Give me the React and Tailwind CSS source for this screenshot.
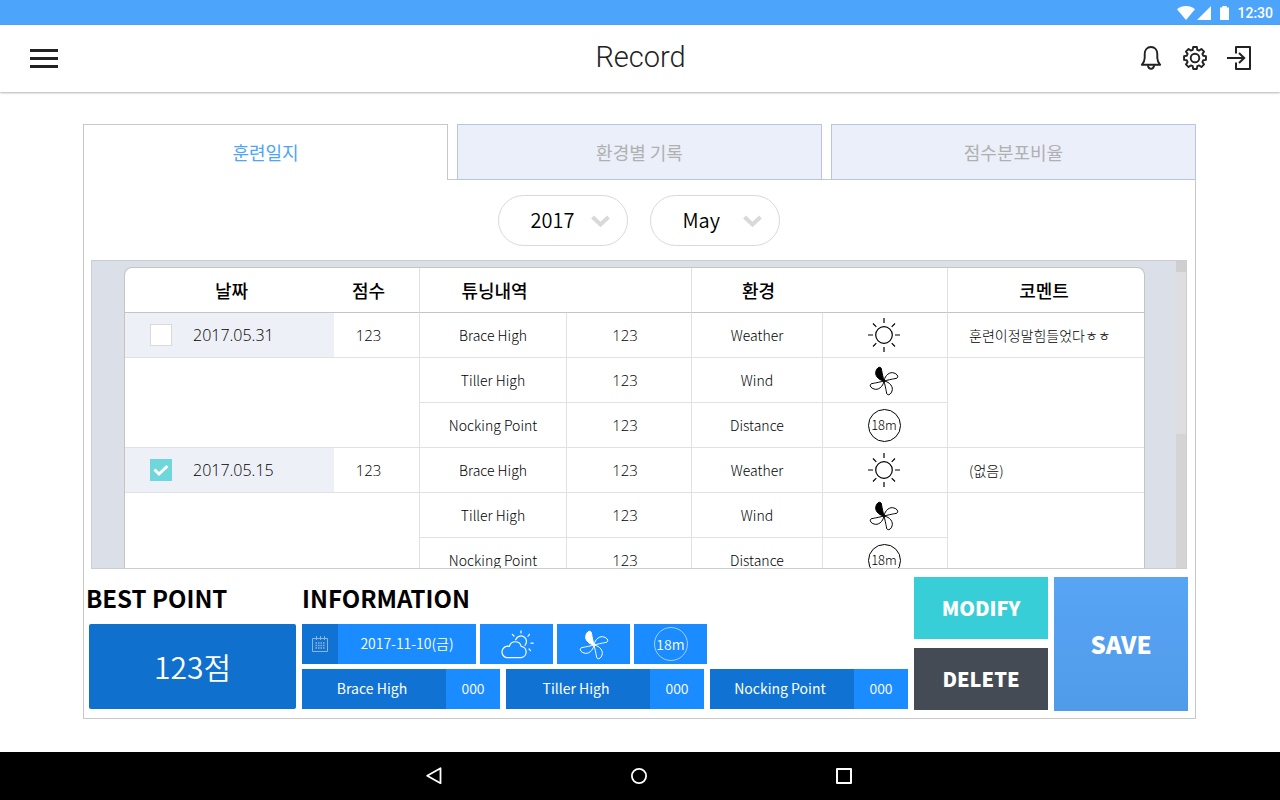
import { useState } from "react";

const KR = "font-['Noto_Sans_CJK_KR',sans-serif]";

function gearPath() {
  const points = [];
  for (let i = 0; i < 8; i++) {
    const base = (i * Math.PI) / 4;
    [[-0.27, 8.5], [-0.17, 11.1], [0.17, 11.1], [0.27, 8.5]].forEach(([a, r]) => {
      points.push(`${(12 + r * Math.sin(base + a)).toFixed(2)} ${(12 - r * Math.cos(base + a)).toFixed(2)}`);
    });
  }
  return `M${points.join("L")}Z`;
}

function BellIcon() {
  return (
    <svg width="24" height="24" viewBox="0 0 24 24" fill="none" stroke="#222" strokeWidth="1.9" strokeLinejoin="round">
      <path d="M12 1C8 1 5.7 4 5.7 8V12C5.7 15 5 16.3 2.8 18.8H21.2C19 16.3 18.3 15 18.3 12V8C18.3 4 16 1 12 1Z" />
      <path d="M8.8 19.2C9.2 21.7 10.4 22.9 12 22.9S14.8 21.7 15.2 19.2" />
    </svg>
  );
}

function GearIcon() {
  return (
    <svg width="24" height="24" viewBox="0 0 24 24" fill="none" stroke="#222" strokeWidth="1.9" strokeLinejoin="round">
      <path d={gearPath()} />
      <circle cx="12" cy="12" r="4.3" />
    </svg>
  );
}

function ExitIcon() {
  return (
    <svg width="24" height="24" viewBox="0 0 24 24" fill="none" stroke="#222" strokeWidth="2" strokeLinejoin="round">
      <path d="M9 7.5V1H23V23H9V16.5" />
      <path d="M0 12H17M12 7L17.2 12L12 17" strokeLinejoin="miter" />
    </svg>
  );
}

function SunIcon() {
  return (
    <svg width="36" height="36" viewBox="0 0 36 36" fill="none" stroke="#000" strokeWidth="1.2" role="img" aria-label="Sunny">
      <circle cx="18" cy="18" r="8.3" />
      <path d="M18 1V6M18 30V35M2 18H7M29 18H34M7 6.5L10.3 9.8M29 6.5L25.7 9.8M7 29.5L10.3 26.2M29 29.5L25.7 26.2" />
    </svg>
  );
}

const BLADE = "M0 0C-6 -1 -9.5 -6 -8 -10C-7 -14 -3 -15 -2.6 -12C-2 -9 -1.5 -6 0 0Z";

function FanIcon() {
  return (
    <svg width="32" height="32" viewBox="-16 -17 32 32" fill="none" stroke="currentColor" strokeWidth="1" role="img" aria-label="Wind">
      <path d={BLADE} fill="currentColor" />
      <path d={BLADE} transform="rotate(90)" />
      <path d={BLADE} transform="rotate(180)" />
      <path d={BLADE} transform="rotate(270)" />
    </svg>
  );
}

function CloudSunIcon() {
  return (
    <svg width="34" height="29" viewBox="0 0 34 29" fill="none" stroke="#fff" strokeWidth="1.2" strokeLinecap="round" role="img" aria-label="Partly cloudy">
      <path d="M6.3 27.6H21.2A5.7 5.7 0 0 0 21.2 16.3A6.1 6.1 0 0 0 9.4 16.3A5.7 5.7 0 0 0 6.3 27.6Z" />
      <path d="M15.6 9.8A5.6 5.6 0 1 1 25 15.4" />
      <path d="M21 .9V3M12.3 4.3L14 6M29.5 4.3L28 6.2M31 13.2H33.2M29 18.9L30.5 20.6" />
    </svg>
  );
}

function CalendarIcon() {
  return (
    <svg width="16" height="16" viewBox="0 0 16 16" fill="none" stroke="#8fb3d9" strokeWidth="1" aria-hidden="true">
      <path d="M.5 2.5H15.5V15.5H.5ZM4.5 0V4M8.5 0V4M12.5 0V4" />
      <path d="M3.5 7H12.5M3.5 9.5H12.5M3.5 12H12.5" strokeWidth="1.4" strokeDasharray="1.5 1" />
    </svg>
  );
}

function PillSelect({ id, label, options }) {
  return (
    <div className="relative">
      <label htmlFor={id} className="sr-only">{label}</label>
      <select
        id={id}
        className="h-[51px] w-[130px] appearance-none rounded-full border border-[#d9d9d9] bg-white pb-[2px] pl-8 text-[20px] font-[350] leading-9 text-black"
      >
        {options.map((o) => <option key={o}>{o}</option>)}
      </select>
      <svg className="pointer-events-none absolute right-[18px] top-5" width="19" height="13" viewBox="0 0 19 13" fill="none" stroke="#d9d9d9" strokeWidth="4">
        <path d="M1.5 2L9.5 9.5L17.5 2" />
      </svg>
    </div>
  );
}

const LINE = "border-[#e1e1e1]";

function Measure({ label, value, conditions, icon }) {
  return (
    <>
      <td className={`border-b border-r ${LINE}`}>{label}</td>
      <td className={`border-b border-r ${LINE} pr-2 font-['Open_Sans',sans-serif] text-[15px]`}>{value}</td>
      <td className={`border-b border-r ${LINE}`}>{conditions}</td>
      <td className={`border-b border-r ${LINE}`}>
        <div className="flex justify-center pr-[2px]">{icon}</div>
      </td>
    </>
  );
}

function DistanceBadge() {
  return (
    <span className="flex size-[33px] items-center justify-center rounded-full border border-black text-[13px]">18m</span>
  );
}

function RecordRows({ date, comment, selected }) {
  const [checked, setChecked] = useState(selected);
  const id = `record-${date}`;
  return (
    <tbody>
      <tr className="h-[45px]">
        <td className={`border-b ${LINE} bg-[#edf0f6] p-0`}>
          <div className="flex items-center gap-[21px] pl-[25px]">
            <span className="relative flex size-[22px]">
              <input
                id={id}
                type="checkbox"
                checked={checked}
                onChange={(e) => setChecked(e.target.checked)}
                className="size-[22px] appearance-none border border-[#d9d9d9] bg-white checked:border-[#6fd6dc] checked:bg-[#6fd6dc]"
              />
              {checked && (
                <svg className="pointer-events-none absolute inset-0" width="22" height="22" viewBox="0 0 22 22" fill="none" stroke="#fff" strokeWidth="3">
                  <path d="M4.5 10.5L9 15L17.5 7" />
                </svg>
              )}
            </span>
            <label htmlFor={id} className="font-['Open_Sans',sans-serif] text-[16px]">{date}</label>
          </div>
        </td>
        <td className={`border-b border-r ${LINE} pr-4 font-['Open_Sans',sans-serif] text-[15px]`}>123</td>
        <Measure label="Brace High" value="123" conditions="Weather" icon={<SunIcon />} />
        <td className={`border-b ${LINE} pl-[21px] text-left`}>{comment}</td>
      </tr>
      <tr className="h-[45px]">
        <td colSpan={2} rowSpan={2} className={`border-b border-r ${LINE}`} />
        <Measure label="Tiller High" value="123" conditions="Wind" icon={<FanIcon />} />
        <td rowSpan={2} className={`border-b ${LINE}`} />
      </tr>
      <tr className="h-[45px]">
        <Measure label="Nocking Point" value="123" conditions="Distance" icon={<DistanceBadge />} />
      </tr>
    </tbody>
  );
}

function RecordTable() {
  const th = "border-b border-b-[#c4c4c4] p-0 text-[18px] font-medium text-black";
  return (
    <div className="flex h-[309px] border border-[#cbcdd1] bg-[#dbdfe8]">
      <div className="min-w-0 flex-1 overflow-y-auto pl-8 pr-[31px] pt-[6px] [scrollbar-width:none]">
        <div className="overflow-hidden rounded-t-lg border-x border-t border-[#c4c4c4] bg-white">
          <table className="w-full table-fixed border-separate border-spacing-0 text-center text-[14px] font-light leading-5 text-black">
            <colgroup>
              <col className="w-[209px]" />
              <col className="w-[86px]" />
              <col className="w-[147px]" />
              <col className="w-[125px]" />
              <col className="w-[131px]" />
              <col className="w-[125px]" />
              <col className="w-[196px]" />
            </colgroup>
            <thead>
              <tr className="h-[45px]">
                <th className={`${th} pl-1`}>날짜</th>
                <th className={`${th} border-r border-r-[#e1e1e1] pr-4`}>점수</th>
                <th colSpan={2} className={`${th} border-r border-r-[#e1e1e1] pr-[122px]`}>튜닝내역</th>
                <th colSpan={2} className={`${th} border-r border-r-[#e1e1e1] pr-[122px]`}>환경</th>
                <th className={`${th} pr-1`}>코멘트</th>
              </tr>
            </thead>
            <RecordRows date="2017.05.31" comment="훈련이정말힘들었다ㅎㅎ" selected={false} />
            <RecordRows date="2017.05.15" comment="(없음)" selected />
          </table>
        </div>
      </div>
      <div className="flex w-[10px] flex-col bg-[#dedee0]" aria-hidden="true">
        <div className="h-[11px] bg-[#cfcfcf]" />
        <div className="mt-auto h-[134px] bg-[#d4d4d4]" />
      </div>
    </div>
  );
}

function Reading({ label, value }) {
  return (
    <div className="flex h-10 flex-1 items-center bg-[#1a8cff] text-[14px] text-white">
      <div className="flex h-full flex-1 items-center justify-center bg-[#1073d4] pb-[2px] pr-1">{label}</div>
      <div className="w-[54px] pb-px text-center font-[350]">{value}</div>
    </div>
  );
}

const TABS = ["훈련일지", "환경별 기록", "점수분포비율"];

function Tabs() {
  const [active, setActive] = useState(0);
  return (
    <div role="tablist" className="flex h-14">
      {TABS.map((name, i) => [
        i > 0 && <div key={`gap-${name}`} className="w-[9px] border-b border-[#c8c8c8]" />,
        <button
          key={name}
          type="button"
          role="tab"
          aria-selected={active === i}
          onClick={() => setActive(i)}
          className={
            active === i
              ? "flex-1 border-x border-t border-[#c8c8c8] bg-white text-[18px] text-[#4da5fb]"
              : "flex-1 border border-[#b9c4de] bg-[#eaeff9] text-[18px] text-[#b0b0b0]"
          }
        >
          {name}
        </button>,
      ])}
    </div>
  );
}

export default function App() {
  return (
    <div className={`flex min-h-screen flex-col bg-white ${KR}`}>
      <div className="flex h-[25px] items-center justify-end bg-[#4da5fb] pr-[7px] pt-px font-['Roboto',sans-serif] text-[14px] font-medium text-white">
        <svg width="54" height="14" viewBox="0 0 54 14" fill="#fff" aria-hidden="true">
          <path d="M9 14L0 3.2C5 -1 13 -1 18 3.2Z" />
          <path d="M20 14L34 0V14Z" />
          <path d="M43 1.5H45.3V0H49.7V1.5H52V14H43Z" />
        </svg>
        <span className="ml-[6px]">12:30</span>
      </div>

      <header className="grid h-[67px] grid-cols-3 items-center bg-white pb-px pl-[30px] pr-[29px] shadow-[0_1px_2px_rgba(0,0,0,0.3)]">
        <button type="button" aria-label="Menu" className="flex w-7 flex-col gap-[5px]">
          <span className="h-[3px] bg-[#222]" />
          <span className="h-[3px] bg-[#222]" />
          <span className="h-[3px] bg-[#222]" />
        </button>
        <h1 className="text-center font-['Roboto',sans-serif] text-[29px] font-light text-[#222]">Record</h1>
        <div className="flex justify-end gap-5">
          <button type="button" aria-label="Notifications"><BellIcon /></button>
          <button type="button" aria-label="Settings"><GearIcon /></button>
          <button type="button" aria-label="Log out"><ExitIcon /></button>
        </div>
      </header>

      <main className="flex-1 pb-[33px] pl-[83px] pr-[84px] pt-8">
        <Tabs />
        <div className="border-x border-b border-[#c8c8c8] pb-[7px] pt-[15px]">
          <div className="mb-[14px] flex justify-center gap-[22px] pr-[2px]">
            <PillSelect id="year" label="Year" options={["2017", "2016", "2015"]} />
            <PillSelect id="month" label="Month" options={["May", "Jun", "Jul"]} />
          </div>

          <div className="pl-[7px] pr-2">
            <RecordTable />
          </div>

          <div className="flex gap-[6px] pl-[2px] pr-[7px] pt-2">
            <section className="w-[210px]">
              <h2 className="mb-[5px] text-[24px] font-bold leading-[42px] text-black">BEST POINT</h2>
              <div className="ml-[3px] flex h-[85px] items-center justify-center rounded-xs bg-[#1070ce] text-[30px] font-[350] text-white">123점</div>
            </section>

            <section className="min-w-0 flex-1">
              <h2 className="mb-[5px] text-[24px] font-bold leading-[42px] text-black">INFORMATION</h2>
              <div className="mb-[5px] flex h-10 gap-1 text-[14px] font-[350] text-white">
                <div className="flex w-[174px] items-center bg-[#1a8cff]">
                  <div className="flex h-full w-9 items-center justify-center bg-[#1073d4]"><CalendarIcon /></div>
                  <div className="flex-1 pb-px text-center">2017-11-10(금)</div>
                </div>
                <div className="flex w-[73px] items-center justify-center bg-[#1a8cff]"><CloudSunIcon /></div>
                <div className="flex w-[73px] items-center justify-center bg-[#1a8cff]"><FanIcon /></div>
                <div className="flex w-[73px] items-center justify-center bg-[#1a8cff]">
                  <span className="flex size-[34px] items-center justify-center rounded-full border border-[#a3d1ff]">18m</span>
                </div>
              </div>
              <div className="flex gap-[6px]">
                <Reading label="Brace High" value="000" />
                <Reading label="Tiller High" value="000" />
                <Reading label="Nocking Point" value="000" />
              </div>
            </section>

            <div className="flex w-[134px] flex-col gap-[9px] text-[20px] font-black text-white">
              <button type="button" className="h-[62px] bg-[#37ced8]">MODIFY</button>
              <button type="button" className="h-[62px] bg-[#444b55]">DELETE</button>
            </div>
            <button type="button" className="h-[134px] w-[134px] bg-linear-to-b from-[#58a4f5] to-[#509be9] text-[24px] font-black text-white">
              SAVE
            </button>
          </div>
        </div>
      </main>

      <nav className="flex h-12 items-center justify-center gap-[157px] bg-black pr-[2px]">
        <button type="button" aria-label="Back" className="flex w-12 justify-center">
          <svg width="16" height="18" viewBox="0 0 16 18" fill="none" stroke="#fff" strokeWidth="1.8" strokeLinejoin="round"><path d="M14.5 1.2V16.2L1.2 8.7Z" /></svg>
        </button>
        <button type="button" aria-label="Home" className="flex w-12 justify-center">
          <svg width="16" height="16" viewBox="0 0 16 16" fill="none" stroke="#fff" strokeWidth="1.8"><circle cx="8" cy="8" r="7.1" /></svg>
        </button>
        <button type="button" aria-label="Recent apps" className="flex w-12 justify-center">
          <svg width="16" height="16" viewBox="0 0 16 16" fill="none" stroke="#fff" strokeWidth="2" strokeLinejoin="round"><path d="M1 1H15V15H1Z" /></svg>
        </button>
      </nav>
    </div>
  );
}
